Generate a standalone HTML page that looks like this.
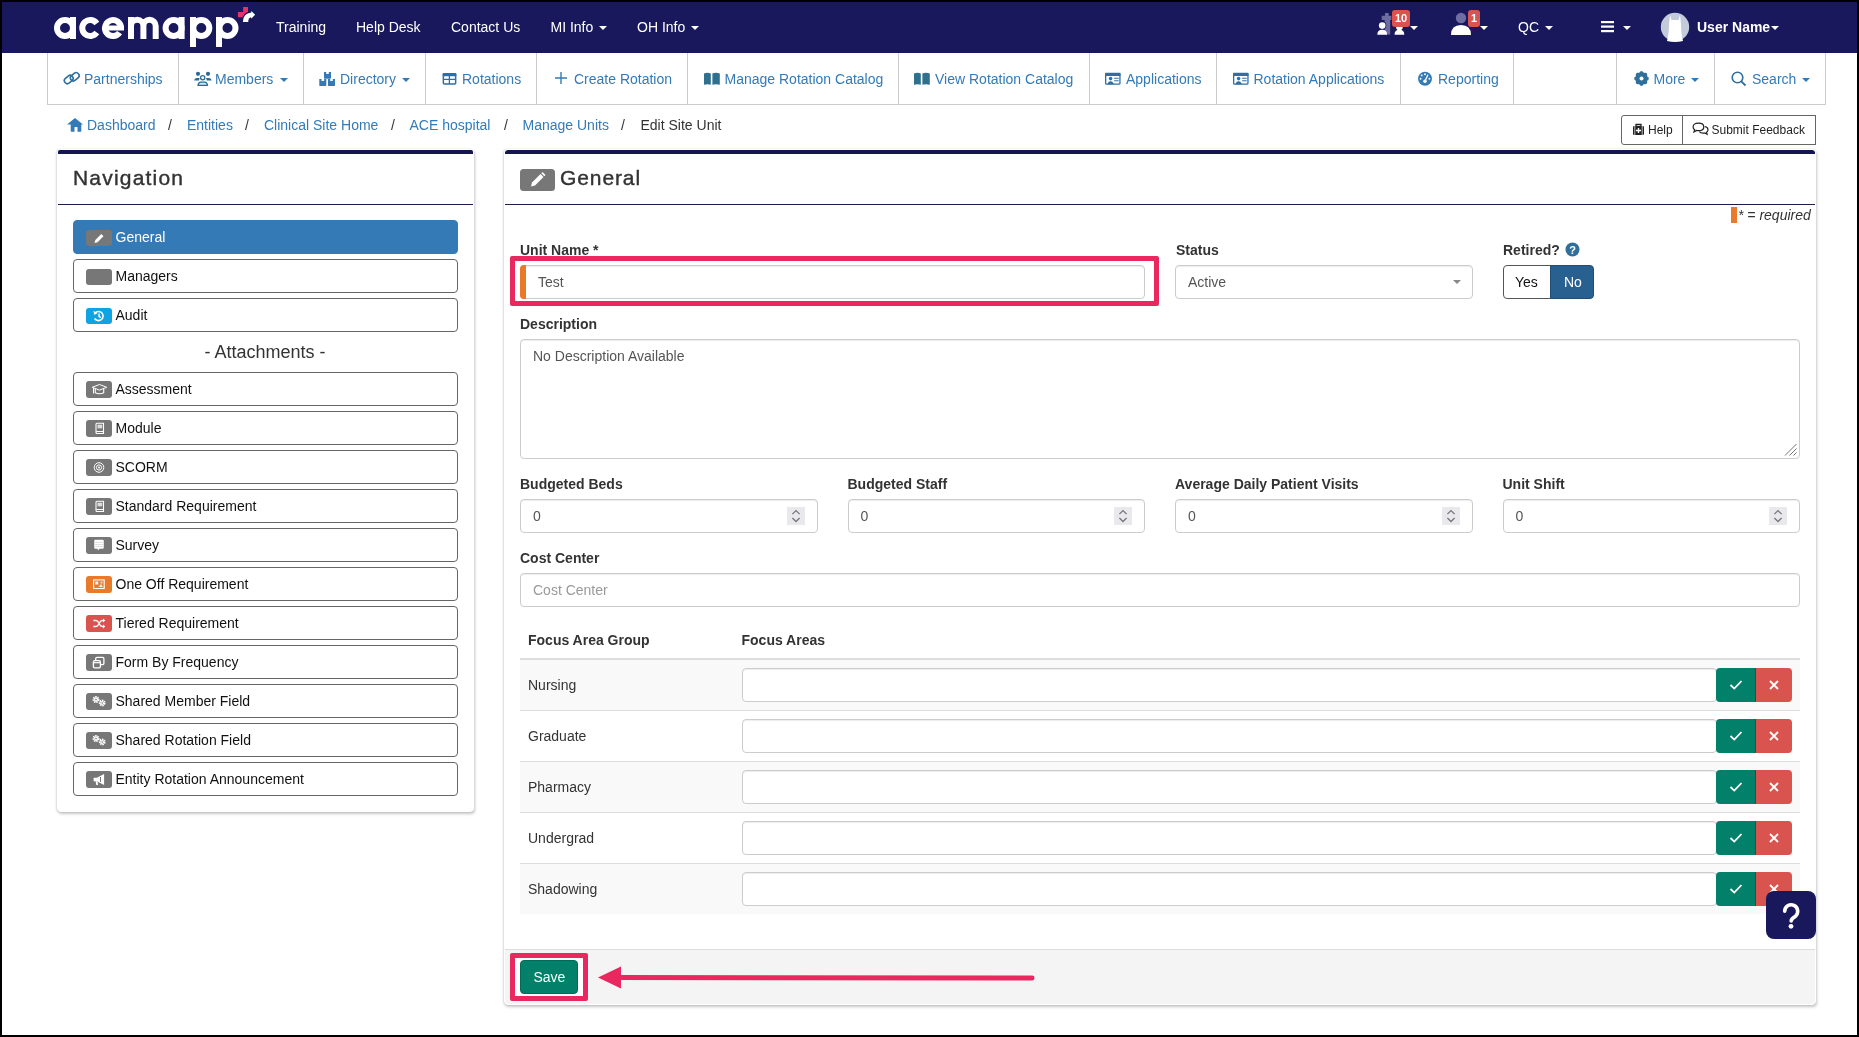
<!DOCTYPE html>
<html><head><meta charset="utf-8">
<style>
*{box-sizing:border-box;margin:0;padding:0}
html,body{width:1859px;height:1037px;overflow:hidden;background:#fff}
body{will-change:transform}
body{font-family:"Liberation Sans",sans-serif;font-size:14px;color:#333;position:relative}
.a{position:absolute;white-space:nowrap}
#frame{position:absolute;left:0;top:0;width:1859px;height:1037px;border:2px solid #000;z-index:100;pointer-events:none}
#hdr{position:absolute;left:2px;top:2px;width:1855px;height:51px;background:#19185d}
.ht{position:absolute;top:19px;line-height:16px;color:#fff;font-size:14px;white-space:nowrap}
.car{position:absolute;width:0;height:0;border-left:4px solid transparent;border-right:4px solid transparent;border-top:4px solid #fff}
.bcar{position:absolute;width:0;height:0;border-left:4px solid transparent;border-right:4px solid transparent;border-top:4px solid #337ab7;top:78px}
.badge{position:absolute;top:10px;height:17px;background:#d9534f;color:#fff;font-weight:bold;font-size:11px;line-height:17px;text-align:center;border-radius:3px}
#nav{position:absolute;left:47px;top:53px;width:1779px;height:52px;border:1px solid #ccc;border-top:0}
.dv{position:absolute;top:53px;width:1px;height:51px;background:#ccc}
.nt{position:absolute;top:71px;line-height:16px;color:#337ab7;font-size:14px;white-space:nowrap}
.ni{position:absolute}
.bt{position:absolute;top:117px;line-height:16px;color:#337ab7;font-size:14px;white-space:nowrap}
.bs{position:absolute;top:117px;line-height:16px;color:#333;font-size:14px}
.card{position:absolute;background:#fff;border:1px solid #fff;border-radius:4px;box-shadow:1px 2px 3px rgba(0,0,0,.22),-1px 0 2px rgba(0,0,0,.12)}
.ctop{position:absolute;left:0;top:0;right:0;height:4px;background:#141452;border-radius:2px 2px 0 0}
.chd{position:absolute;left:0;right:0;height:1px;background:#1d1d4f}
.lb{position:absolute;left:73px;width:385px;height:34px;border:1px solid #666;border-radius:4px;background:#fff}
.lb.act{background:#337ab7;border-color:#337ab7}
.lbt{left:41.5px;top:8px;line-height:16px;font-size:14px;color:#111}
.act .lbt{color:#fff}
.lbl{position:absolute;font-weight:bold;font-size:14px;line-height:16px;color:#333;white-space:nowrap}
.inp{position:absolute;height:34px;border:1px solid #ccc;border-radius:4px;background:#fff;box-shadow:inset 0 1px 1px rgba(0,0,0,.075)}
.itx{position:absolute;font-size:14px;line-height:16px;color:#555;white-space:nowrap}
</style></head><body>
<div id="frame"></div>
<div id="hdr"></div>
<svg class="a" style="left:0;top:0" width="270" height="52" viewBox="0 0 270 52">
 <g fill="none" stroke="#fff" stroke-width="6">
  <circle cx="65" cy="28" r="8"/>
  <path d="M96.8 23.4 A8 8 0 1 0 96.8 32.6"/>
  <path d="M119.6 32.6 A8 8 0 1 1 121 28"/><path d="M104.5 28 H124" stroke-width="5"/>
  <circle cx="173.6" cy="28" r="8"/>
  <circle cx="201.3" cy="28" r="8"/>
  <circle cx="227.5" cy="28" r="8"/>
  <path d="M131 39 V26 A6.2 6.2 0 0 1 143.4 26 V39 M143.4 26 A6.15 6.15 0 0 1 155.7 26 V39"/>
 </g>
 <g fill="#fff">
  <rect x="70" y="17" width="6" height="22"/>
  <rect x="128" y="17" width="6" height="10"/>
  <rect x="178.6" y="17" width="6" height="22"/>
  <rect x="190" y="17" width="6" height="30"/>
  <rect x="216" y="17" width="6" height="30"/>
 </g>
 <g fill="#e8306a">
  <rect x="243.1" y="7" width="4.9" height="9"/>
  <rect x="237.9" y="12" width="9.5" height="5.3"/>
 </g>
 <path d="M242.9 22 Q243 13.5 251.3 12.6 L251.4 11 L255.1 14.8 L251.2 18.7 L251.2 17.3 Q248.3 17.6 248.2 22 Z" fill="#19185d" stroke="#19185d" stroke-width="2.6" stroke-linejoin="round"/>
 <path d="M242.9 22 Q243 13.5 251.3 12.6 L251.4 11 L255.1 14.8 L251.2 18.7 L251.2 17.3 Q248.3 17.6 248.2 22 Z" fill="#fff"/>
</svg>
<span class="ht" style="left:276px">Training</span>
<span class="ht" style="left:356px">Help Desk</span>
<span class="ht" style="left:451px">Contact Us</span>
<span class="ht" style="left:550.5px">MI Info</span><span class="car" style="left:599px;top:26px"></span>
<span class="ht" style="left:637px">OH Info</span><span class="car" style="left:691px;top:26px"></span>
<svg class="a" style="left:1375px;top:8px" width="50" height="30" viewBox="1375 8 50 30">
 <path d="M1385 13 h3.7 v2.8 h2.7 v4.2 h-1.2 v14.6 h-5.6 v-14.6 h-2.9 v-4.2 h3.3z" fill="#6d6c9e"/>
 <circle cx="1382.2" cy="25.6" r="4.1" fill="#19185d"/>
 <circle cx="1382.2" cy="25.6" r="3.3" fill="#fff"/>
 <path d="M1377.3 34.8 q0-5 4.9-5 q4.9 0 4.9 5z" fill="#fff"/>
 <circle cx="1399.4" cy="27" r="3.3" fill="#fff"/>
 <path d="M1394.5 34.8 q0-5 4.9-5 q4.9 0 4.9 5z" fill="#fff"/>
</svg>
<div class="badge" style="left:1392px;width:18px">10</div>
<span class="car" style="left:1410px;top:26px"></span>
<svg class="a" style="left:1450px;top:12px" width="22" height="24" viewBox="0 0 22 24">
 <circle cx="11" cy="6" r="5.2" fill="#6e6da2"/>
 <path d="M1 23 q0-10 10-10 q10 0 10 10z" fill="#fff"/>
</svg>
<div class="badge" style="left:1468px;width:12px">1</div>
<span class="car" style="left:1480px;top:26px"></span>
<span class="ht" style="left:1518px">QC</span><span class="car" style="left:1545px;top:26px"></span>
<svg class="a" style="left:1601px;top:20px" width="14" height="13" viewBox="0 0 14 13">
 <rect x="0" y="1" width="13" height="2.2" fill="#fff"/><rect x="0" y="5.5" width="13" height="2.2" fill="#fff"/><rect x="0" y="10" width="13" height="2.2" fill="#fff"/>
</svg>
<span class="car" style="left:1623px;top:26px"></span>
<svg class="a" style="left:1660px;top:12px" width="30" height="30" viewBox="0 0 30 30">
 <circle cx="15" cy="15" r="14.2" fill="#c3cad9"/>
 <path d="M10 3 L11.5 8 h7 L20 3 L21 12 Q21 22 23 29 Q15 31 7 29 Q9 22 9 12 Z" fill="#fff"/>
</svg>
<span class="ht" style="left:1697px;font-weight:bold">User Name</span><span class="car" style="left:1771px;top:26px"></span>
<div id="nav"></div>
<div class="dv" style="left:178px"></div><div class="dv" style="left:303px"></div><div class="dv" style="left:425px"></div><div class="dv" style="left:536px"></div><div class="dv" style="left:687px"></div><div class="dv" style="left:898px"></div><div class="dv" style="left:1089px"></div><div class="dv" style="left:1216px"></div><div class="dv" style="left:1400px"></div><div class="dv" style="left:1513px"></div><div class="dv" style="left:1616px"></div><div class="dv" style="left:1714px"></div>
<span class="nt" style="left:84px">Partnerships</span><svg class="a" style="left:63px;top:71px" width="18" height="15" viewBox="0 0 18 15"><g fill="none" stroke="#2f6f9a" stroke-width="1.6"><rect x="1" y="5.5" width="9.5" height="6" rx="3" transform="rotate(-40 5.75 8.5)"/><rect x="7" y="2.8" width="9.5" height="6" rx="3" transform="rotate(-40 11.75 5.8)"/></g></svg>
<span class="nt" style="left:215px">Members</span><span class="bcar" style="left:280px"></span><svg class="a" style="left:192px;top:70px" width="22" height="18" viewBox="192 70 22 18"><g fill="#2c6b90"><circle cx="198" cy="73.8" r="2.1"/><circle cx="208" cy="73.8" r="2.1"/><path d="M194.1 80.6 q0.3-2.6 2.6-2.6 h2.6 q0.4 0 0.2 0.6 l-0.6 2z M211.6 80.6 q-0.3-2.6 -2.6-2.6 h-2.6 q-0.4 0 -0.2 0.6 l0.6 2z"/></g><circle cx="202.7" cy="77.7" r="2.1" fill="none" stroke="#2c6b90" stroke-width="1.3"/><path d="M198 85.4 q0.5-3.3 2.6-3.3 h4.3 q2.1 0 2.6 3.3z" fill="#cfe6f5" stroke="#2c6b90" stroke-width="1.3" stroke-linejoin="round"/></svg>
<span class="nt" style="left:340px">Directory</span><span class="bcar" style="left:402px"></span><svg class="a" style="left:319px;top:71px" width="17" height="16" viewBox="0 0 17 16"><g fill="#337ab7"><path d="M5 1 h2.2 v2 h2.6 v-2 h2.2 v5.8 q0 .9 -.9 .9 h-5.2 q-.9 0 -.9 -.9z"/><path d="M0.3 8 h2.2 v2 h2.6 v-2 h2.2 v6.2 q0 .9 -.9 .9 h-5.2 q-.9 0 -.9 -.9z"/><path d="M9 8 h2.2 v2 h2.6 v-2 h2.2 v6.2 q0 .9 -.9 .9 h-5.2 q-.9 0 -.9 -.9z"/></g></svg>
<span class="nt" style="left:462px">Rotations</span><svg class="a" style="left:440px;top:70px" width="20" height="18" viewBox="440 70 20 18"><rect x="443.35" y="73.65" width="12.3" height="10.4" rx="1" fill="none" stroke="#2f6fa7" stroke-width="1.5"/><rect x="442.6" y="72.9" width="13.8" height="3.3" rx="1" fill="#2f6fa7"/><path d="M443 79.4 H456 M449.4 76 V84" stroke="#2f6fa7" stroke-width="1.3"/></svg>
<span class="nt" style="left:574px">Create Rotation</span><svg class="a" style="left:555px;top:72px" width="12" height="12" viewBox="0 0 12 12"><path d="M6 0 v12 M0 6 h12" stroke="#337ab7" stroke-width="1.4"/></svg>
<span class="nt" style="left:724.5px">Manage Rotation Catalog</span><svg class="a" style="left:702.8px;top:70px" width="19" height="17" viewBox="702.8 70 19 17"><path d="M703.8 73.4 q3.6 -1.2 6.8 0 v11.3 q-3.2 -1.1 -6.8 0z M712.1999999999999 73.4 q3.4 -1.2 7.4 0 v11.3 q-4 -1.1 -7.4 0z" fill="#30708f"/></svg>
<span class="nt" style="left:935px">View Rotation Catalog</span><svg class="a" style="left:913.3px;top:70px" width="19" height="17" viewBox="913.3 70 19 17"><path d="M914.3 73.4 q3.6 -1.2 6.8 0 v11.3 q-3.2 -1.1 -6.8 0z M922.6999999999999 73.4 q3.4 -1.2 7.4 0 v11.3 q-4 -1.1 -7.4 0z" fill="#30708f"/></svg>
<span class="nt" style="left:1126px">Applications</span><svg class="a" style="left:1103.4px;top:70px" width="20" height="18" viewBox="1103.4 70 20 18"><rect x="1106.0500000000002" y="73.6" width="14.3" height="10.6" rx="1" fill="none" stroke="#2f6fa7" stroke-width="1.3"/><rect x="1105.4" y="72.8" width="15.6" height="3.3" rx="1" fill="#2f6fa7"/><circle cx="1111.0" cy="78.6" r="1.8" fill="#2f6fa7"/><path d="M1108.0 84.3 q0.4-3 3-3 q2.6 0 3 3z" fill="#2f6fa7"/><path d="M1115.0 78.3 h3.6 M1115.0 80.8 h3.6" stroke="#2f6fa7" stroke-width="1.1" stroke-linecap="round"/></svg>
<span class="nt" style="left:1253.5px">Rotation Applications</span><svg class="a" style="left:1231.3px;top:70px" width="20" height="18" viewBox="1231.3 70 20 18"><rect x="1233.95" y="73.6" width="14.3" height="10.6" rx="1" fill="none" stroke="#2f6fa7" stroke-width="1.3"/><rect x="1233.3" y="72.8" width="15.6" height="3.3" rx="1" fill="#2f6fa7"/><circle cx="1238.8999999999999" cy="78.6" r="1.8" fill="#2f6fa7"/><path d="M1235.8999999999999 84.3 q0.4-3 3-3 q2.6 0 3 3z" fill="#2f6fa7"/><path d="M1242.8999999999999 78.3 h3.6 M1242.8999999999999 80.8 h3.6" stroke="#2f6fa7" stroke-width="1.1" stroke-linecap="round"/></svg>
<span class="nt" style="left:1438px">Reporting</span><svg class="a" style="left:1415px;top:69px" width="20" height="19" viewBox="1415 69 20 19"><circle cx="1425" cy="78.7" r="7" fill="#337ab7"/><g fill="#fff"><circle cx="1420.6" cy="78.7" r=".95"/><circle cx="1421.7" cy="75.4" r=".95"/><circle cx="1425" cy="74.2" r=".95"/><circle cx="1429.4" cy="78.7" r=".95"/><circle cx="1425" cy="81.3" r="1.8"/></g><path d="M1425 81 L1427.7 75.2" stroke="#fff" stroke-width="1.3" stroke-linecap="round"/></svg>
<span class="nt" style="left:1653.5px">More</span><span class="bcar" style="left:1691px"></span><svg class="a" style="left:1634px;top:71px" width="15" height="15" viewBox="0 0 15 15"><circle cx="7.5" cy="7.5" r="4.7" fill="none" stroke="#2f6f9a" stroke-width="3.4"/><g stroke="#2f6f9a" stroke-width="2.6"><path d="M7.5 0.3 v14.4 M0.3 7.5 h14.4 M2.4 2.4 l10.2 10.2 M12.6 2.4 l-10.2 10.2"/></g><circle cx="7.5" cy="7.5" r="2" fill="#fff"/></svg>
<span class="nt" style="left:1752px">Search</span><span class="bcar" style="left:1802px"></span><svg class="a" style="left:1731px;top:71px" width="16" height="16" viewBox="0 0 16 16"><circle cx="6.5" cy="6.5" r="5.3" fill="none" stroke="#2f6f9a" stroke-width="1.6"/><path d="M10.3 10.3 L14.5 14.5" stroke="#2f6f9a" stroke-width="1.8"/></svg>
<svg class="a" style="left:66px;top:117px" width="18" height="16" viewBox="0 0 18 16"><path d="M9 1 L17 7.5 L15.3 7.5 L15.3 14 q0 .8 -.8 .8 h-3 v-4.8 h-3 v4.8 h-3 q-.8 0 -.8 -.8 V7.5 H1 Z" fill="#337ab7"/></svg>
<span class="bt" style="left:87px">Dashboard</span><span class="bs" style="left:168px">/</span>
<span class="bt" style="left:187px">Entities</span><span class="bs" style="left:245px">/</span>
<span class="bt" style="left:264px">Clinical Site Home</span><span class="bs" style="left:391px">/</span>
<span class="bt" style="left:409.5px">ACE hospital</span><span class="bs" style="left:504px">/</span>
<span class="bt" style="left:522.5px">Manage Units</span><span class="bs" style="left:621px">/</span>
<span class="bs" style="left:640.5px">Edit Site Unit</span>
<div class="a" style="left:1621px;top:115px;width:62px;height:30px;border:1px solid #666;border-radius:3px 0 0 3px;background:#fff"></div>
<div class="a" style="left:1682px;top:115px;width:134px;height:30px;border:1px solid #666;border-radius:0;background:#fff"></div>
<svg class="a" style="left:1632px;top:123px" width="13" height="13" viewBox="0 0 13 13"><rect x="1" y="3" width="11" height="9" rx="1.2" fill="#222"/><path d="M4 3 V1.5 h5 V3" fill="none" stroke="#222" stroke-width="1.3"/><path d="M6.5 5 v5 M4 7.5 h5" stroke="#fff" stroke-width="1.4"/><path d="M2.8 3 v9 M10.2 3 v9" stroke="#fff" stroke-width=".7"/></svg>
<span class="a" style="left:1648px;top:123px;font-size:12px;line-height:14px;color:#222">Help</span>
<svg class="a" style="left:1692px;top:122px" width="17" height="14" viewBox="0 0 17 14"><path d="M6.5 1.2 q5.3 0 5.3 3.7 q0 3.7 -5.3 3.7 q-1 0 -1.9 -.2 l-2.6 1.5 l.7 -2.2 q-1.6 -1 -1.6 -2.8 q0 -3.7 5.4 -3.7z" fill="none" stroke="#222" stroke-width="1.2"/><path d="M12.8 4.5 q3.2 .7 3.2 3.2 q0 1.7 -1.5 2.6 l.6 2 l-2.3 -1.3 q-.7 .2 -1.6 .2 q-2.6 0 -3.9 -1.5" fill="none" stroke="#222" stroke-width="1.2"/></svg>
<span class="a" style="left:1711.5px;top:123px;font-size:12px;line-height:14px;color:#222">Submit Feedback</span>
<div class="card" style="left:57px;top:149px;width:417px;height:663px"><div class="ctop"></div><div class="chd" style="top:54px"></div></div>
<span class="a" style="left:73px;top:164px;font-size:21px;line-height:28px;letter-spacing:1.2px;-webkit-text-stroke:.4px #333;color:#333">Navigation</span>
<div class="lb act" style="top:220px"><svg class="a" style="left:12px;top:9px" width="26" height="16" viewBox="0 0 26 16"><rect width="26" height="16" rx="3" fill="#777"/><path d="M8.5 13 L9.3 10 L15.3 4 L17.5 6.2 L11.5 12.2 Z" fill="#fff"/></svg><span class="a lbt">General</span></div>
<div class="lb" style="top:259px"><svg class="a" style="left:12px;top:9px" width="26" height="16" viewBox="0 0 26 16"><rect width="26" height="16" rx="3" fill="#777"/></svg><span class="a lbt">Managers</span></div>
<div class="lb" style="top:298px"><svg class="a" style="left:12px;top:9px" width="26" height="16" viewBox="0 0 26 16"><rect width="26" height="16" rx="3" fill="#0fa3e2"/><path d="M9.2 4.8 A4.6 4.6 0 1 1 8.6 10.5" fill="none" stroke="#fff" stroke-width="1.6"/><path d="M7.3 3 L8.4 7 L11.6 4.9Z" fill="#fff"/><path d="M13 5.6 V8.3 L14.8 9.6" fill="none" stroke="#fff" stroke-width="1.4"/></svg><span class="a lbt">Audit</span></div>
<div class="lb" style="top:372px"><svg class="a" style="left:12px;top:8px" width="26" height="17" viewBox="0 -0.5 26 17"><rect y="-0.5" width="26" height="17" rx="3" fill="#777"/><path d="M6.2 5.8 L13.5 3 L20.8 5.8 L13.5 8.6 Z" fill="none" stroke="#fff" stroke-width="1"/><path d="M9.3 7.6 V11.2 Q13.5 13.2 17.7 11.2 V7.6" fill="none" stroke="#fff" stroke-width="1.1"/><path d="M7.5 6.3 V12" stroke="#fff" stroke-width="1"/></svg><span class="a lbt">Assessment</span></div>
<div class="lb" style="top:411px"><svg class="a" style="left:12px;top:8px" width="26" height="17" viewBox="0 -0.5 26 17"><rect y="-0.5" width="26" height="17" rx="3" fill="#777"/><path d="M10 3.8 q0-1 1-1 h6.5 v10.2 h-6.5 q-1 0 -1-1z" fill="none" stroke="#fff" stroke-width="1.1"/><rect x="11.5" y="4.2" width="4.7" height="3.6" fill="#ddd"/><path d="M10.2 11 h7.3" stroke="#fff" stroke-width="1"/></svg><span class="a lbt">Module</span></div>
<div class="lb" style="top:450px"><svg class="a" style="left:12px;top:8px" width="26" height="17" viewBox="0 -0.5 26 17"><rect y="-0.5" width="26" height="17" rx="3" fill="#777"/><circle cx="13" cy="8" r="4.8" fill="none" stroke="#fff" stroke-width="1"/><circle cx="13" cy="8" r="2.6" fill="none" stroke="#fff" stroke-width="1"/><circle cx="13" cy="8" r="1" fill="#fff"/></svg><span class="a lbt">SCORM</span></div>
<div class="lb" style="top:489px"><svg class="a" style="left:12px;top:8px" width="26" height="17" viewBox="0 -0.5 26 17"><rect y="-0.5" width="26" height="17" rx="3" fill="#777"/><path d="M10 3.8 q0-1 1-1 h6.5 v10.2 h-6.5 q-1 0 -1-1z" fill="none" stroke="#fff" stroke-width="1.1"/><rect x="11.5" y="4.2" width="4.7" height="3.6" fill="#ddd"/><path d="M10.2 11 h7.3" stroke="#fff" stroke-width="1"/></svg><span class="a lbt">Standard Requirement</span></div>
<div class="lb" style="top:528px"><svg class="a" style="left:12px;top:8px" width="26" height="17" viewBox="0 -0.5 26 17"><rect y="-0.5" width="26" height="17" rx="3" fill="#777"/><path d="M8.2 3.5 q0-1.2 1.2-1.2 h7.2 q1.2 0 1.2 1.2 v6.5 q0 1.2 -1.2 1.2 h-3 l-1.6 1.8 l-.4 -1.8 h-2.2 q-1.2 0 -1.2 -1.2z" fill="#fff"/><path d="M8.5 5 h9 M8.5 7 h9 M8.5 9 h9" stroke="#ccc" stroke-width="0.6"/></svg><span class="a lbt">Survey</span></div>
<div class="lb" style="top:567px"><svg class="a" style="left:12px;top:8px" width="26" height="17" viewBox="0 -0.5 26 17"><rect y="-0.5" width="26" height="17" rx="3" fill="#ea7a2b"/><rect x="7.6" y="3.4" width="10.6" height="8.6" fill="none" stroke="#fff" stroke-width="1.1"/><rect x="9.3" y="5" width="3" height="3" fill="#fff" opacity=".9"/><path d="M12.5 10.6 l2.5 -3 l2 3z" fill="#fff" opacity=".9"/><rect x="14.5" y="5" width="2" height="2" fill="#fff" opacity=".7"/></svg><span class="a lbt">One Off Requirement</span></div>
<div class="lb" style="top:606px"><svg class="a" style="left:12px;top:8px" width="26" height="17" viewBox="0 -0.5 26 17"><rect y="-0.5" width="26" height="17" rx="3" fill="#d9534f"/><path d="M7.3 5 h2.4 q1.6 0 2.6 1.6 l1.6 2.8 q1 1.6 2.6 1.6 h1.2 M7.3 11 h2.4 q1.6 0 2.6 -1.6 l1.6 -2.8 q1 -1.6 2.6 -1.6 h1.2" fill="none" stroke="#fff" stroke-width="1.3"/><path d="M17 3 l2.3 2 l-2.3 2z M17 9 l2.3 2 l-2.3 2z" fill="#fff"/></svg><span class="a lbt">Tiered Requirement</span></div>
<div class="lb" style="top:645px"><svg class="a" style="left:12px;top:8px" width="26" height="17" viewBox="0 -0.5 26 17"><rect y="-0.5" width="26" height="17" rx="3" fill="#777"/><rect x="7.4" y="6.2" width="7" height="7.2" rx="1.3" fill="none" stroke="#fff" stroke-width="1.3"/><path d="M9.7 6 v-1.8 q0-1.3 1.3-1.3 h5.6 q1.3 0 1.3 1.3 v4.6 q0 1.3 -1.3 1.3 h-2" fill="none" stroke="#fff" stroke-width="1.3"/><path d="M7.4 8.2 h7" stroke="#fff" stroke-width="1.2"/></svg><span class="a lbt">Form By Frequency</span></div>
<div class="lb" style="top:684px"><svg class="a" style="left:12px;top:8px" width="26" height="17" viewBox="0 -0.5 26 17"><rect y="-0.5" width="26" height="17" rx="3" fill="#777"/><circle cx="10" cy="6" r="2.4" fill="none" stroke="#fff" stroke-width="2.2" stroke-dasharray="1.3 .6"/><circle cx="10" cy="6" r="1.9" fill="#fff"/><circle cx="10" cy="6" r=".8" fill="#777"/><circle cx="16.2" cy="9.5" r="2.3" fill="none" stroke="#fff" stroke-width="2.2" stroke-dasharray="1.3 .6"/><circle cx="16.2" cy="9.5" r="1.8" fill="#fff"/><circle cx="16.2" cy="9.5" r=".8" fill="#777"/></svg><span class="a lbt">Shared Member Field</span></div>
<div class="lb" style="top:723px"><svg class="a" style="left:12px;top:8px" width="26" height="17" viewBox="0 -0.5 26 17"><rect y="-0.5" width="26" height="17" rx="3" fill="#777"/><circle cx="10" cy="6" r="2.4" fill="none" stroke="#fff" stroke-width="2.2" stroke-dasharray="1.3 .6"/><circle cx="10" cy="6" r="1.9" fill="#fff"/><circle cx="10" cy="6" r=".8" fill="#777"/><circle cx="16.2" cy="9.5" r="2.3" fill="none" stroke="#fff" stroke-width="2.2" stroke-dasharray="1.3 .6"/><circle cx="16.2" cy="9.5" r="1.8" fill="#fff"/><circle cx="16.2" cy="9.5" r=".8" fill="#777"/></svg><span class="a lbt">Shared Rotation Field</span></div>
<div class="lb" style="top:762px"><svg class="a" style="left:12px;top:8px" width="26" height="17" viewBox="0 -0.5 26 17"><rect y="-0.5" width="26" height="17" rx="3" fill="#777"/><path d="M7.6 6.2 h3.3 l7.2 -3.7 v11 l-7.2 -3.7 h-3.3z" fill="#fff"/><path d="M14.5 5.5 v5" stroke="#777" stroke-width="1"/><path d="M9.5 9.7 l.9 3.8 h1.7 l-.6 -3.8z" fill="#fff"/></svg><span class="a lbt">Entity Rotation Announcement</span></div>
<span class="a" style="left:57px;width:416px;text-align:center;top:342px;font-size:18px;line-height:20px;color:#333">- Attachments -</span>
<div class="card" style="left:504px;top:149px;width:1312px;height:856px;overflow:hidden"><div class="ctop"></div><div class="chd" style="top:54px"></div><div class="a" style="left:0;top:799px;width:1310px;height:55px;background:#f4f4f4;border-top:1px solid #ddd;border-radius:0 0 3px 3px"></div></div>
<svg class="a" style="left:520px;top:169px" width="35" height="22" viewBox="0 0 35 22"><rect width="35" height="22" rx="3.5" fill="#777"/><path d="M11 17.5 L12 13.5 L20.5 5 L23.5 8 L15 16.5 Z" fill="#fff"/><path d="M21.3 4.2 l1.2 -1.2 l3 3 l-1.2 1.2z" fill="#fff"/></svg>
<span class="a" style="left:560px;top:164px;font-size:21px;line-height:28px;letter-spacing:.9px;-webkit-text-stroke:.4px #333;color:#333">General</span>
<div class="a" style="left:1731px;top:207px;width:6px;height:16px;background:#ea7a2b"></div>
<span class="a" style="left:1738px;top:207px;font-size:14px;line-height:16px;font-style:italic;color:#333">* = required</span>
<span class="lbl" style="left:520px;top:242px">Unit Name *</span>
<span class="lbl" style="left:1176px;top:242px">Status</span>
<span class="lbl" style="left:1503px;top:242px">Retired?</span>
<svg class="a" style="left:1565px;top:242px" width="15" height="15" viewBox="0 0 15 15"><circle cx="7.5" cy="7.5" r="7" fill="#2f6f9a"/><text x="7.5" y="11.5" text-anchor="middle" font-family="Liberation Sans" font-weight="bold" font-size="11" fill="#fff">?</text></svg>
<div class="a" style="left:510px;top:256px;width:649px;height:50px;border:5px solid #e8285f;border-radius:2px"></div>
<div class="inp" style="left:520px;top:265px;width:625px"></div><div class="a" style="left:520px;top:265px;width:6px;height:34px;background:#ea7a2b;border-radius:4px 0 0 4px"></div>
<span class="itx" style="left:538px;top:274px">Test</span>
<div class="inp" style="left:1175px;top:265px;width:298px"></div><span class="itx" style="left:1188px;top:274px">Active</span><div class="a" style="left:1453px;top:280px;width:0;height:0;border-left:4px solid transparent;border-right:4px solid transparent;border-top:4px solid #888"></div>
<div class="a" style="left:1503px;top:265px;width:48px;height:34px;border:1px solid #555;border-radius:4px 0 0 4px;background:#fff"></div><div class="a" style="left:1550px;top:265px;width:44px;height:34px;background:#286090;border:1px solid #204d74;border-radius:0 4px 4px 0"></div>
<span class="itx" style="left:1515px;top:274px;color:#111">Yes</span><span class="itx" style="left:1564px;top:274px;color:#fff">No</span>
<span class="lbl" style="left:520px;top:316px">Description</span>
<div class="inp" style="left:520px;top:339px;width:1280px;height:120px"></div><span class="itx" style="left:533px;top:348px">No Description Available</span>
<svg class="a" style="left:1782px;top:441px" width="16" height="16" viewBox="0 0 16 16"><path d="M14.5 3 L3 14.5 M14.5 7.5 L7.5 14.5 M14.5 11.5 L11.5 14.5" stroke="#777" stroke-width="1"/></svg>
<span class="lbl" style="left:520px;top:476px">Budgeted Beds</span>
<div class="inp" style="left:520px;top:499px;width:297.5px"></div><span class="itx" style="left:533px;top:508px">0</span><svg class="a" style="left:786.5px;top:507px" width="18" height="18" viewBox="0 0 18 18"><rect width="18" height="18" fill="#e9e9ed"/><path d="M5.4 7.1 L9 3.6 L12.6 7.1 M5.4 11 L9 14.5 L12.6 11" fill="none" stroke="#777" stroke-width="1.3"/></svg>
<span class="lbl" style="left:847.5px;top:476px">Budgeted Staff</span>
<div class="inp" style="left:847.5px;top:499px;width:297.5px"></div><span class="itx" style="left:860.5px;top:508px">0</span><svg class="a" style="left:1114.0px;top:507px" width="18" height="18" viewBox="0 0 18 18"><rect width="18" height="18" fill="#e9e9ed"/><path d="M5.4 7.1 L9 3.6 L12.6 7.1 M5.4 11 L9 14.5 L12.6 11" fill="none" stroke="#777" stroke-width="1.3"/></svg>
<span class="lbl" style="left:1175px;top:476px">Average Daily Patient Visits</span>
<div class="inp" style="left:1175px;top:499px;width:297.5px"></div><span class="itx" style="left:1188px;top:508px">0</span><svg class="a" style="left:1441.5px;top:507px" width="18" height="18" viewBox="0 0 18 18"><rect width="18" height="18" fill="#e9e9ed"/><path d="M5.4 7.1 L9 3.6 L12.6 7.1 M5.4 11 L9 14.5 L12.6 11" fill="none" stroke="#777" stroke-width="1.3"/></svg>
<span class="lbl" style="left:1502.5px;top:476px">Unit Shift</span>
<div class="inp" style="left:1502.5px;top:499px;width:297.5px"></div><span class="itx" style="left:1515.5px;top:508px">0</span><svg class="a" style="left:1769.0px;top:507px" width="18" height="18" viewBox="0 0 18 18"><rect width="18" height="18" fill="#e9e9ed"/><path d="M5.4 7.1 L9 3.6 L12.6 7.1 M5.4 11 L9 14.5 L12.6 11" fill="none" stroke="#777" stroke-width="1.3"/></svg>
<span class="lbl" style="left:520px;top:550px">Cost Center</span>
<div class="inp" style="left:520px;top:573px;width:1280px"></div><span class="itx" style="left:533px;top:582px;color:#999">Cost Center</span>
<span class="lbl" style="left:528px;top:632px">Focus Area Group</span>
<span class="lbl" style="left:741.5px;top:632px">Focus Areas</span>
<div class="a" style="left:520px;top:658px;width:1280px;height:2px;background:#ddd"></div>
<div class="a" style="left:520px;top:660px;width:1280px;height:50px;background:#f9f9f9"></div><div class="a" style="left:520px;top:710px;width:1280px;height:1px;background:#ddd"></div><span class="itx" style="left:528px;top:677px;color:#333">Nursing</span><div class="inp" style="left:742px;top:668px;width:975px"></div><div class="a" style="left:1716px;top:668px;width:40px;height:34px;background:#03806a;border-radius:4px 0 0 4px;border-right:1px solid #0a5e4a"></div><svg class="a" style="left:1729px;top:679px" width="14" height="12" viewBox="0 0 14 12"><path d="M1.5 6 L5.3 9.6 L12.5 2" fill="none" stroke="#fff" stroke-width="1.8"/></svg><div class="a" style="left:1756px;top:668px;width:36px;height:34px;background:#d9534f;border-radius:0 4px 4px 0"></div><svg class="a" style="left:1768px;top:679px" width="12" height="12" viewBox="0 0 12 12"><path d="M2 2 L10 10 M10 2 L2 10" stroke="#fff" stroke-width="1.8"/></svg>
<div class="a" style="left:520px;top:711px;width:1280px;height:50px;background:#fff"></div><div class="a" style="left:520px;top:761px;width:1280px;height:1px;background:#ddd"></div><span class="itx" style="left:528px;top:728px;color:#333">Graduate</span><div class="inp" style="left:742px;top:719px;width:975px"></div><div class="a" style="left:1716px;top:719px;width:40px;height:34px;background:#03806a;border-radius:4px 0 0 4px;border-right:1px solid #0a5e4a"></div><svg class="a" style="left:1729px;top:730px" width="14" height="12" viewBox="0 0 14 12"><path d="M1.5 6 L5.3 9.6 L12.5 2" fill="none" stroke="#fff" stroke-width="1.8"/></svg><div class="a" style="left:1756px;top:719px;width:36px;height:34px;background:#d9534f;border-radius:0 4px 4px 0"></div><svg class="a" style="left:1768px;top:730px" width="12" height="12" viewBox="0 0 12 12"><path d="M2 2 L10 10 M10 2 L2 10" stroke="#fff" stroke-width="1.8"/></svg>
<div class="a" style="left:520px;top:762px;width:1280px;height:50px;background:#f9f9f9"></div><div class="a" style="left:520px;top:812px;width:1280px;height:1px;background:#ddd"></div><span class="itx" style="left:528px;top:779px;color:#333">Pharmacy</span><div class="inp" style="left:742px;top:770px;width:975px"></div><div class="a" style="left:1716px;top:770px;width:40px;height:34px;background:#03806a;border-radius:4px 0 0 4px;border-right:1px solid #0a5e4a"></div><svg class="a" style="left:1729px;top:781px" width="14" height="12" viewBox="0 0 14 12"><path d="M1.5 6 L5.3 9.6 L12.5 2" fill="none" stroke="#fff" stroke-width="1.8"/></svg><div class="a" style="left:1756px;top:770px;width:36px;height:34px;background:#d9534f;border-radius:0 4px 4px 0"></div><svg class="a" style="left:1768px;top:781px" width="12" height="12" viewBox="0 0 12 12"><path d="M2 2 L10 10 M10 2 L2 10" stroke="#fff" stroke-width="1.8"/></svg>
<div class="a" style="left:520px;top:813px;width:1280px;height:50px;background:#fff"></div><div class="a" style="left:520px;top:863px;width:1280px;height:1px;background:#ddd"></div><span class="itx" style="left:528px;top:830px;color:#333">Undergrad</span><div class="inp" style="left:742px;top:821px;width:975px"></div><div class="a" style="left:1716px;top:821px;width:40px;height:34px;background:#03806a;border-radius:4px 0 0 4px;border-right:1px solid #0a5e4a"></div><svg class="a" style="left:1729px;top:832px" width="14" height="12" viewBox="0 0 14 12"><path d="M1.5 6 L5.3 9.6 L12.5 2" fill="none" stroke="#fff" stroke-width="1.8"/></svg><div class="a" style="left:1756px;top:821px;width:36px;height:34px;background:#d9534f;border-radius:0 4px 4px 0"></div><svg class="a" style="left:1768px;top:832px" width="12" height="12" viewBox="0 0 12 12"><path d="M2 2 L10 10 M10 2 L2 10" stroke="#fff" stroke-width="1.8"/></svg>
<div class="a" style="left:520px;top:864px;width:1280px;height:50px;background:#f9f9f9"></div><span class="itx" style="left:528px;top:881px;color:#333">Shadowing</span><div class="inp" style="left:742px;top:872px;width:975px"></div><div class="a" style="left:1716px;top:872px;width:40px;height:34px;background:#03806a;border-radius:4px 0 0 4px;border-right:1px solid #0a5e4a"></div><svg class="a" style="left:1729px;top:883px" width="14" height="12" viewBox="0 0 14 12"><path d="M1.5 6 L5.3 9.6 L12.5 2" fill="none" stroke="#fff" stroke-width="1.8"/></svg><div class="a" style="left:1756px;top:872px;width:36px;height:34px;background:#d9534f;border-radius:0 4px 4px 0"></div><svg class="a" style="left:1768px;top:883px" width="12" height="12" viewBox="0 0 12 12"><path d="M2 2 L10 10 M10 2 L2 10" stroke="#fff" stroke-width="1.8"/></svg>
<div class="a" style="left:1766px;top:891px;width:50px;height:48px;background:#19185d;border-radius:8px"></div><svg class="a" style="left:1766px;top:891px" width="50" height="48" viewBox="1766 891 50 48"><path d="M1784.7 911.3 A6.5 6.5 0 1 1 1795.4 916.3 Q1791.2 918.5 1791.2 921" fill="none" stroke="#fff" stroke-width="3.6" stroke-linecap="round"/><circle cx="1791" cy="926.3" r="2.4" fill="#fff"/></svg>
<div class="a" style="left:510px;top:953px;width:78px;height:48px;border:5px solid #e8285f;border-radius:2px;background:#fff"></div>
<div class="a" style="left:520px;top:960px;width:58px;height:34px;background:#03806a;border-radius:4px;border:1px solid #026b58"></div><span class="itx" style="left:533.5px;top:969px;color:#fff">Save</span>
<svg class="a" style="left:590px;top:960px" width="460" height="36" viewBox="590 960 460 36"><path d="M616 977.6 L1032 977.9" stroke="#e8285f" stroke-width="5" stroke-linecap="round"/><path d="M598 977.5 L621 966.5 L621 988.5 Z" fill="#e8285f"/></svg>
</body></html>
